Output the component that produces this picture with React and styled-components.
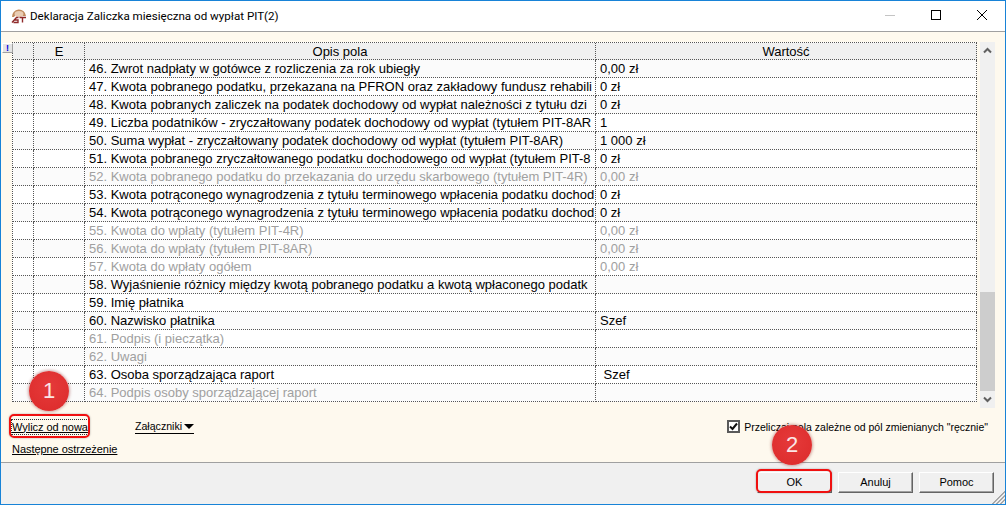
import React from 'react';
import styled, { createGlobalStyle } from 'styled-components';

const GlobalStyle = createGlobalStyle`
  html, body {
    margin: 0;
    padding: 0;
    background: #fff;
  }
  body {
    font-family: 'Liberation Sans', Arial, sans-serif;
    overflow: hidden;
  }
`;

const Window = styled.div`
  position: relative;
  width: 1006px;
  height: 505px;
  box-sizing: border-box;
  display: flex;
  flex-direction: column;
  border: 1px solid #1883d7;
  background: #fff;
  overflow: hidden;
`;

const TitleBar = styled.div`
  height: 30px;
  flex: none;
  display: flex;
  align-items: center;
  padding-left: 9px;
  border-bottom: 1px solid #a0a0a0;
`;

const TitleText = styled.div`
  margin-left: 2px;
  font-family: Roboto, sans-serif;
  font-size: 11.6px;
  color: #000;
  white-space: nowrap;
  flex: 1;
`;

const WindowButton = styled.div`
  width: 46px;
  height: 28px;
  align-self: flex-start;
  display: flex;
  align-items: center;
  justify-content: center;
`;

const Panel = styled.div`
  position: relative;
  flex: 1;
  min-height: 0;
  display: flex;
  flex-direction: column;
  background: #fef9ee;
  padding: 10px 10px 0 11px;
  border-bottom: 1px solid #a0a0a0;
`;

const GridArea = styled.div`
  display: flex;
  height: 366px;
  flex: none;
`;

const Table = styled.div`
  width: 965px;
  height: 360px;
  box-sizing: border-box;
  border-top: 1px dotted #555;
  border-left: 1px dotted #555;
  background: #fff;
`;

const Row = styled.div`
  display: grid;
  grid-template-columns: 21px 51px 511px 381px;
  height: ${({ $header }) => ($header ? '17px' : '18px')};
  box-sizing: border-box;
  background: ${({ $header, $odd }) => ($header ? '#f0f0f0' : $odd ? '#fbfbfb' : '#fff')};
  color: ${({ $off }) => ($off ? '#a0a0a0' : '#000')};
`;

const Cell = styled.div`
  box-sizing: border-box;
  border-right: 1px dotted #555;
  border-bottom: 1px dotted #555;
  font-size: 13px;
  line-height: 17px;
  white-space: pre;
  overflow: hidden;
  padding-left: ${({ $pad }) => $pad || 0}px;
  text-align: ${({ $center }) => ($center ? 'center' : 'left')};
`;

const Scrollbar = styled.div`
  width: 16px;
  margin-left: 3px;
  background: #f0f0f0;
  display: flex;
  flex-direction: column;
`;

const ScrollArrow = styled.div`
  height: 17px;
  flex: none;
  display: flex;
  align-items: center;
  justify-content: center;
`;

const ScrollTrack = styled.div`
  flex: 1;
  display: flex;
  flex-direction: column;
  justify-content: flex-end;
`;

const ScrollThumb = styled.div`
  height: 99px;
  background: #cdcdcd;
`;

const WarnFlag = styled.div`
  position: absolute;
  left: 1px;
  top: 11px;
  width: 9px;
  height: 8px;
  background: #e4e4e4;
  border: 1px solid;
  border-color: #fff #a0a0a0 #a0a0a0 #fff;
  color: #0000e0;
  font-size: 9px;
  font-weight: bold;
  line-height: 8px;
  text-align: center;
`;

const Options = styled.div`
  flex: 1;
  display: grid;
  grid-template-columns: 123px 1fr auto;
  grid-template-rows: 23px 22px;
  padding-top: 7px;
  padding-right: 7px;
  font-size: 11px;
  color: #000;
`;

const LinkText = styled.span`
  text-decoration: underline;
  white-space: nowrap;
`;

const FocusLink = styled(LinkText)`
  justify-self: start;
  align-self: center;
  outline: 1px dotted #333;
  line-height: 14px;
  letter-spacing: -0.03px;
`;

const AttachLink = styled.span`
  justify-self: start;
  align-self: center;
  display: inline-flex;
  align-items: center;
  gap: 2px;
  white-space: nowrap;
  font-size: 10.6px;
  line-height: 13px;
  border-bottom: 1px solid #000;
`;

const Triangle = styled.span`
  width: 0;
  height: 0;
  border-left: 5px solid transparent;
  border-right: 5px solid transparent;
  border-top: 5px solid #000;
`;

const NextLink = styled(LinkText)`
  grid-column: 1 / 3;
  align-self: center;
  letter-spacing: -0.05px;
`;

const CheckWrap = styled.label`
  display: flex;
  align-items: center;
  gap: 4px;
  align-self: center;
  white-space: nowrap;
  font-size: 10.5px;
`;

const CheckBox = styled.span`
  width: 9px;
  height: 9px;
  border: 2px solid #5a5a5a;
  background: #fff;
  display: flex;
  align-items: center;
  justify-content: center;
`;

const Footer = styled.div`
  height: 41px;
  flex: none;
  position: relative;
  background: #f0f0f0;
  display: flex;
  justify-content: flex-end;
  align-items: flex-start;
  gap: 6px;
  padding: 9px 11px 0 0;
  box-sizing: border-box;
`;

const Button = styled.div`
  width: 75px;
  height: 21px;
  box-sizing: border-box;
  background: #f0f0f0;
  border: 1px solid;
  border-color: #fff #646464 #646464 #fff;
  box-shadow: inset -1px -1px 0 #a0a0a0;
  font-size: 11px;
  line-height: 19px;
  text-align: center;
  color: #000;
`;

const Grip = styled.svg`
  position: absolute;
  right: 0;
  bottom: 0;
`;

const Badge = styled.div`
  position: absolute;
  left: ${({ $x }) => $x}px;
  top: ${({ $y }) => $y}px;
  width: 40px;
  height: 40px;
  border-radius: 50%;
  background: radial-gradient(circle at 50% 40%, #e53a3a, #dc2a2a);
  box-shadow: 0 0 3px 1px rgba(120, 0, 0, 0.35);
  color: #fbe6e6;
  font-size: 22px;
  line-height: 40px;
  text-align: center;
`;

const RedBox = styled.div`
  position: absolute;
  left: ${({ $x }) => $x}px;
  top: ${({ $y }) => $y}px;
  width: ${({ $w }) => $w}px;
  height: ${({ $h }) => $h}px;
  box-sizing: border-box;
  border: 2px solid #f01010;
  border-radius: 5px;
  box-shadow: 0 0 2px rgba(0, 0, 0, 0.35);
  pointer-events: none;
`;

// labels are cut where the grid cuts them in the original
const rows = [
  ['46. Zwrot nadpłaty w gotówce z rozliczenia za rok ubiegły', '0,00 zł'],
  ['47. Kwota pobranego podatku, przekazana na PFRON oraz zakładowy fundusz rehabili', '0 zł'],
  ['48. Kwota pobranych zaliczek na podatek dochodowy od wypłat należności z tytułu dzi', '0 zł'],
  ['49. Liczba podatników - zryczałtowany podatek dochodowy od wypłat (tytułem PIT-8AR', '1'],
  ['50. Suma wypłat - zryczałtowany podatek dochodowy od wypłat (tytułem PIT-8AR)', '1 000 zł'],
  ['51. Kwota pobranego zryczałtowanego podatku dochodowego od wypłat (tytułem PIT-8', '0 zł'],
  ['52. Kwota pobranego podatku do przekazania do urzędu skarbowego (tytułem PIT-4R)', '0,00 zł', true],
  ['53. Kwota potrąconego wynagrodzenia z tytułu terminowego wpłacenia podatku dochod', '0 zł'],
  ['54. Kwota potrąconego wynagrodzenia z tytułu terminowego wpłacenia podatku dochod', '0 zł'],
  ['55. Kwota do wpłaty (tytułem PIT-4R)', '0,00 zł', true],
  ['56. Kwota do wpłaty (tytułem PIT-8AR)', '0,00 zł', true],
  ['57. Kwota do wpłaty ogółem', '0,00 zł', true],
  ['58. Wyjaśnienie różnicy między kwotą pobranego podatku a kwotą wpłaconego podatk', ''],
  ['59. Imię płatnika', ''],
  ['60. Nazwisko płatnika', 'Szef'],
  ['61. Podpis (i pieczątka)', '', true],
  ['62. Uwagi', '', true],
  ['63. Osoba sporządzająca raport', ' Szef'],
  ['64. Podpis osoby sporządzającej raport', '', true],
];

const Chevron = ({ down }) => (
  <svg width="9" height="7" viewBox="0 0 9 7">
    <path
      d={down ? 'M1 1.5 L4.5 5 L8 1.5' : 'M1 5.5 L4.5 2 L8 5.5'}
      fill="none"
      stroke="#606060"
      strokeWidth="2"
    />
  </svg>
);

const Logo = () => (
  <svg width="18" height="18" viewBox="0 0 18 18">
    <path d="M2 10 A7 7 0 0 1 16 9 L13 9 A5 3.5 0 0 0 4 10 Z" fill="#c08a5c" />
    <ellipse cx="9" cy="7" rx="4.5" ry="3" fill="#e9cdb4" />
    <path
      d="M2 15.5 L6.5 10.5 H8.5 M4.5 13 H8 V15.5 H3.5 M9.5 10.5 H16 M12.5 10.5 V15.5"
      fill="none"
      stroke="#8f2a2a"
      strokeWidth="1.4"
    />
  </svg>
);

export default function App() {
  return (
    <>
      <GlobalStyle />
      <Window>
        <TitleBar>
          <Logo />
          <TitleText>Deklaracja Zaliczka miesięczna od wypłat PIT(2)</TitleText>
          <WindowButton>
            <svg width="10" height="10" viewBox="0 0 10 10">
              <path d="M0 5.5 H10" stroke="#c4c4c4" strokeWidth="1" />
            </svg>
          </WindowButton>
          <WindowButton>
            <svg width="10" height="10" viewBox="0 0 10 10">
              <rect x="0.5" y="0.5" width="9" height="9" fill="none" stroke="#000" strokeWidth="1" />
            </svg>
          </WindowButton>
          <WindowButton>
            <svg width="10" height="10" viewBox="0 0 10 10">
              <path d="M0 0 L10 10 M10 0 L0 10" stroke="#000" strokeWidth="1" />
            </svg>
          </WindowButton>
        </TitleBar>
        <Panel>
          <WarnFlag>!</WarnFlag>
          <GridArea>
            <Table>
              <Row $header>
                <Cell />
                <Cell $center>E</Cell>
                <Cell $center>Opis pola</Cell>
                <Cell $center>Wartość</Cell>
              </Row>
              {rows.map(([label, value, off], i) => (
                <Row key={label + i} $odd={i % 2 === 0} $off={off}>
                  <Cell />
                  <Cell />
                  <Cell $pad={4}>{label}</Cell>
                  <Cell $pad={4}>{value}</Cell>
                </Row>
              ))}
            </Table>
            <Scrollbar>
              <ScrollArrow>
                <Chevron />
              </ScrollArrow>
              <ScrollTrack>
                <ScrollThumb />
              </ScrollTrack>
              <ScrollArrow>
                <Chevron down />
              </ScrollArrow>
            </Scrollbar>
          </GridArea>
          <Options>
            <FocusLink>Wylicz od nowa</FocusLink>
            <AttachLink>
              Załączniki
              <Triangle />
            </AttachLink>
            <CheckWrap>
              <CheckBox>
                <svg width="9" height="9" viewBox="0 0 9 9">
                  <path d="M1 4.5 L3.5 7 L8 1.5" fill="none" stroke="#111" strokeWidth="2" />
                </svg>
              </CheckBox>
              Przeliczaj pola zależne od pól zmienianych "ręcznie"
            </CheckWrap>
            <NextLink>Następne ostrzeżenie</NextLink>
          </Options>
        </Panel>
        <Footer>
          <Button>OK</Button>
          <Button>Anuluj</Button>
          <Button>Pomoc</Button>
          <Grip width="14" height="14" viewBox="0 0 14 14">
            <path
              d="M14 1 L1 14 M14 2 L2 14 M14 5 L5 14 M14 6 L6 14 M14 9 L9 14 M14 10 L10 14"
              stroke="#a8a8a8"
              strokeWidth="1"
            />
          </Grip>
        </Footer>
        <RedBox $x={8} $y={413} $w={81} $h={24} />
        <RedBox $x={755} $y={468} $w={76} $h={24} />
        <Badge $x={28} $y={370}>1</Badge>
        <Badge $x={771} $y={424}>2</Badge>
      </Window>
    </>
  );
}
